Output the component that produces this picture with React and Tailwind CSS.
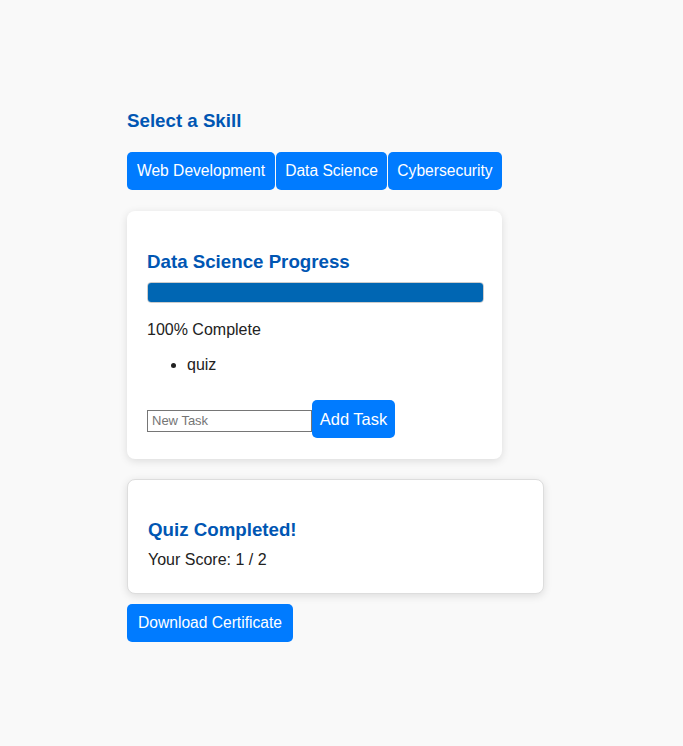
import React, { useState } from 'react';

const skills = [
  { name: 'Web Development', w: 'w-[148px]' },
  { name: 'Data Science', w: 'w-[111px]' },
  { name: 'Cybersecurity', w: 'w-[114px]' },
];

export default function App() {
  const [skill, setSkill] = useState('Data Science');
  const [task, setTask] = useState('');

  return (
    <div className="min-h-[746px] bg-[#f9f9f9] pl-[127px] pt-[110px] font-['Liberation_Sans',Arial,sans-serif] text-[#222]">
      <h2 className="text-[18.72px] font-bold leading-[22px] text-[#0056b3]">Select a Skill</h2>

      {/* Skill buttons */}
      <div className="mt-[20px] flex gap-px">
        {skills.map((s) => (
          <button
            key={s.name}
            onClick={() => setSkill(s.name)}
            className={`h-[38px] ${s.w} rounded-[5px] bg-[#007bff] text-[15.6px] text-white`}
          >
            {s.name}
          </button>
        ))}
      </div>

      {/* Progress card */}
      <div className="mt-[21px] w-[375px] rounded-[8px] bg-white px-[20px] pt-[40px] pb-[21px] shadow-[0_2px_8px_rgba(0,0,0,0.12)]">
        <h3 className="text-[18.72px] font-bold leading-[22px] text-[#0056b3]">{skill} Progress</h3>
        <div className="mt-[9px] h-[21px] w-[337px] overflow-hidden rounded-[4px] border border-[#ccc] bg-[#eee]">
          <div className="h-full bg-[#0066b3]" style={{ width: '100%' }} />
        </div>
        <p className="mt-[18px] text-[16px] leading-[18px]">100% Complete</p>
        <ul className="mt-[17px] list-disc pl-[40px] text-[16px] leading-[18px]">
          <li>quiz</li>
        </ul>
        <div className="mt-[26px] flex items-center">
          <input
            value={task}
            onChange={(e) => setTask(e.target.value)}
            placeholder="New Task"
            className="mt-[3px] h-[22px] w-[165px] border border-[#767676] px-[4px] text-[13px] placeholder:text-[#757575]"
          />
          <button className="h-[38px] w-[83px] rounded-[5px] bg-[#007bff] text-[16.5px] text-white">Add Task</button>
        </div>
      </div>

      {/* Quiz result card */}
      <div className="mt-[20px] w-[417px] rounded-[8px] border border-[#ddd] bg-white px-[20px] pt-[39px] pb-[24px] shadow-[0_2px_8px_rgba(0,0,0,0.12)]">
        <h3 className="text-[18.72px] font-bold leading-[22px] text-[#0056b3]">Quiz Completed!</h3>
        <p className="mt-[10px] text-[16px] leading-[18px]">Your Score: 1 / 2</p>
      </div>

      <button className="mt-[10px] h-[38px] w-[166px] rounded-[5px] bg-[#007bff] text-[15.6px] text-white">
        Download Certificate
      </button>
    </div>
  );
}
